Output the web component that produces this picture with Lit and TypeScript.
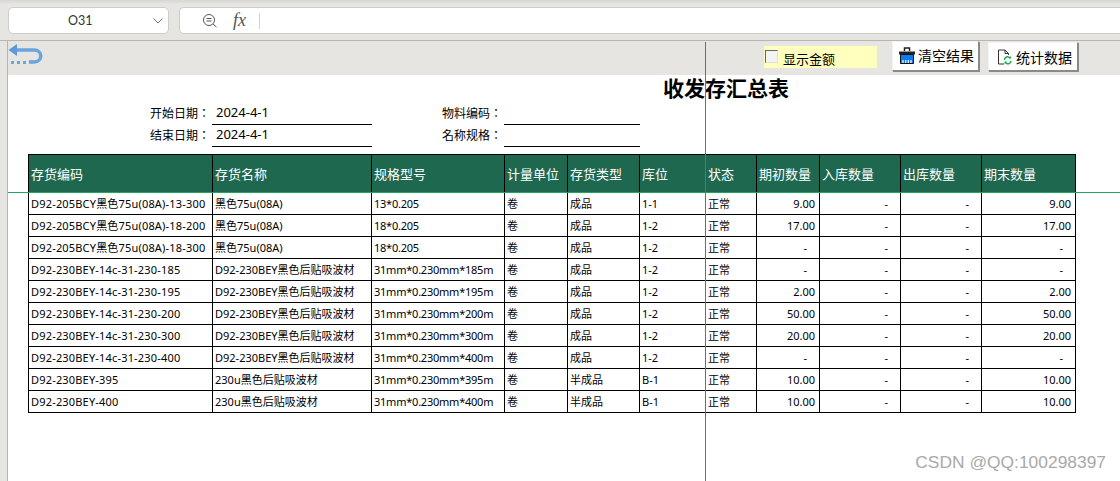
import { LitElement, html, css, svg } from "lit";
import { customElement } from "lit/decorators.js";

type Row = string[];
const ROWS: Row[] = [
  ["D92-205BCY黑色75u(08A)-13-300", "黑色75u(08A)", "13*0.205", "卷", "成品", "1-1", "正常", "9.00", "-", "-", "9.00"],
  ["D92-205BCY黑色75u(08A)-18-200", "黑色75u(08A)", "18*0.205", "卷", "成品", "1-2", "正常", "17.00", "-", "-", "17.00"],
  ["D92-205BCY黑色75u(08A)-18-300", "黑色75u(08A)", "18*0.205", "卷", "成品", "1-2", "正常", "-", "-", "-", "-"],
  ["D92-230BEY-14c-31-230-185", "D92-230BEY黑色后贴吸波材", "31mm*0.230mm*185m", "卷", "成品", "1-2", "正常", "-", "-", "-", "-"],
  ["D92-230BEY-14c-31-230-195", "D92-230BEY黑色后贴吸波材", "31mm*0.230mm*195m", "卷", "成品", "1-2", "正常", "2.00", "-", "-", "2.00"],
  ["D92-230BEY-14c-31-230-200", "D92-230BEY黑色后贴吸波材", "31mm*0.230mm*200m", "卷", "成品", "1-2", "正常", "50.00", "-", "-", "50.00"],
  ["D92-230BEY-14c-31-230-300", "D92-230BEY黑色后贴吸波材", "31mm*0.230mm*300m", "卷", "成品", "1-2", "正常", "20.00", "-", "-", "20.00"],
  ["D92-230BEY-14c-31-230-400", "D92-230BEY黑色后贴吸波材", "31mm*0.230mm*400m", "卷", "成品", "1-2", "正常", "-", "-", "-", "-"],
  ["D92-230BEY-395", "230u黑色后贴吸波材", "31mm*0.230mm*395m", "卷", "半成品", "B-1", "正常", "10.00", "-", "-", "10.00"],
  ["D92-230BEY-400", "230u黑色后贴吸波材", "31mm*0.230mm*400m", "卷", "半成品", "B-1", "正常", "10.00", "-", "-", "10.00"],
];
const HEAD = ["存货编码", "存货名称", "规格型号", "计量单位", "存货类型", "库位", "状态", "期初数量", "入库数量", "出库数量", "期末数量"];
const WIDTHS = [184, 159, 133, 63, 72, 66, 51, 63, 81, 81, 94];

@customElement("app-root")
export class AppRoot extends LitElement {
  static styles = css`
    :host {
      display: block;
      position: relative;
      width: 1120px;
      height: 481px;
      overflow: hidden;
      background: #e6e5e1;
      font-family: "Noto Sans", "Noto Sans CJK SC", sans-serif;
      color: #000;
    }
    .top {
      display: flex;
      gap: 10px;
      height: 41px;
      box-sizing: border-box;
      padding: 7px 0 8px 8px;
      border-bottom: 1px solid #b8b6b1;
      background: linear-gradient(#d6d5d1 0, #e6e5e1 4px);
    }
    .namebox, .fx {
      background: #fff;
      border: 1px solid #cfcdc8;
      border-radius: 5px;
      display: flex;
      align-items: center;
      box-sizing: border-box;
      height: 27px;
    }
    .namebox { width: 161px; flex: none; justify-content: space-between; padding: 0 4px 0 59px; font-family: "Lato", sans-serif; font-size: 12.5px; color: #333; }
    .fx { flex: 1; border-right: none; border-radius: 5px 0 0 5px; padding-left: 22px; gap: 15px; }
    .fxsep { width: 1px; height: 16px; background: #d5d3ce; margin-left: -2px; }
    .fxt { font-family: "Liberation Serif", serif; font-style: italic; font-size: 18px; color: #555; }
    .sheet { margin-left: 7px; border-left: 1px solid #b8b6b1; height: 440px; background: #fff; }
    .bar {
      height: 34px;
      background: #e6e5e1;
      display: flex;
      align-items: flex-start;
    }
    .back { margin: 1px 0 0 0; flex: none; line-height: 0; }
    .amount {
      margin: 5px 0 0 720px;
      width: 113px;
      height: 22px;
      background: #ffffbe;
      display: flex;
      align-items: center;
      box-sizing: border-box;
      padding: 0 0 0 1px;
      gap: 5px;
      font-size: 13px;
    }
    .box {
      width: 11px; height: 11px;
      flex: none;
      background: #f4f4f4;
      border: 1px solid;
      border-color: #666 #ddd #ddd #666;
      margin-top: -2px;
    }
    .amount span { line-height: 18px; padding-top: 3px; }
    .btn {
      box-sizing: border-box;
      height: 30px;
      background: #fff;
      border: 1px solid;
      border-color: #f4f4f4 #8a8a86 #8a8a86 #f4f4f4;
      box-shadow: 1px 1px 0 #8a8a86;
      display: flex;
      align-items: center;
      font-size: 14px;
      white-space: nowrap;
    }
    .b1 { width: 87px; margin-left: 15px; padding-left: 5px; gap: 2px; }
    .b1 span { margin-top: -2px; }
    .b2 { width: 90px; margin-left: 9px; padding-left: 8px; gap: 4px; margin-top: 1px; height: 29px; }
    .report { padding: 0 0 0 20px; }
    .title {
      margin: 0;
      padding-left: 635px;
      font-size: 21px;
      font-weight: 700;
      line-height: 27px;
      white-space: nowrap;
    }
    .meta {
      display: grid;
      grid-template-columns: 184px 160px 132px 136px;
      grid-template-rows: 23px 22px;
      font-size: 12px;
    }
    .meta .l {
      font-family: "Noto Sans CJK TC", "Noto Sans CJK SC", sans-serif;
      text-align: right;
      line-height: 20px;
      padding: 0 2px 2px 0;
      align-self: end;
    }
    .meta .v {
      border-bottom: 1px solid #000;
      line-height: 20px;
      height: 23px;
      padding: 0 0 2px 4px;
      box-sizing: border-box;
      font-size: 13px;
      align-self: end;
    }
    table {
      border-collapse: collapse;
      table-layout: fixed;
      width: 1047px;
      margin-top: 7px;
      font-size: 11px;
    }
    th, td {
      border: 1px solid #000;
      padding: 0 0 0 2px;
      overflow: hidden;
      white-space: nowrap;
      text-align: left;
      font-weight: 400;
    }
    th {
      height: 38px;
      background: #1f6850;
      color: #fff;
      font-size: 13px;
      box-sizing: border-box;
    }
    td { height: 22px; box-sizing: border-box; line-height: 20px; }
    td.code { letter-spacing: 0.18px; }
    td.spec { letter-spacing: -0.23px; }
    td.n { text-align: right; padding: 0 4px 0 0; }
    td.d { padding-right: 12px; }
    .hline { position: absolute; left: 8px; right: 0; top: 192px; height: 1px; background: #1fa660; }
    .vline { position: absolute; left: 705px; top: 42px; bottom: 0; width: 1px; background: #1f9a5c; }
    .wm {
      position: absolute;
      right: 14px;
      top: 452px;
      font-family: "Liberation Sans", sans-serif;
      font-size: 17.4px;
      line-height: 20px;
      color: #a9a9a9;
      white-space: nowrap;
    }
  `;

  private chevron() {
    return svg`<svg width="12" height="8" viewBox="0 0 12 8"><path d="M1.5 1.5 6 6l4.5-4.5" fill="none" stroke="#777" stroke-width="1"/></svg>`;
  }
  private zoomIcon() {
    return svg`<svg width="16" height="16" viewBox="0 0 16 16" fill="none" stroke="#555" stroke-width="1"><circle cx="7" cy="7" r="5.5"/><path d="M4.5 5.500h5M4.500 8h5M11 11l3.500 3"/></svg>`;
  }
  private backIcon() {
    return svg`<svg width="36" height="24" viewBox="0 0 36 24">
      <path d="M7 8H26C35 8 35 20 26 20H21" fill="none" stroke="#6aa5de" stroke-width="3.5"/>
      <path d="M0.500 8 9 2V14Z" fill="#5b9ad8"/>
      <path d="M3 19h3v3H3zM9 19h3v3H9zM15 19h3v3h-3z" fill="#6aa5de"/>
    </svg>`;
  }
  private brushIcon() {
    return svg`<svg width="18" height="18" viewBox="0 0 18 18">
      <path d="M6.500 4V1H11.500V4" fill="none" stroke="#222" stroke-width="1.500"/>
      <path d="M1 4.500H17V7.500H1Z" fill="#222"/>
      <path d="M2.500 7.500H15.500V16.500H2.500Z" fill="#0a7cf0" stroke="#111" stroke-width="1"/>
      <path d="M5 13v3M7.700 13v3M10.300 13v3M13 13v3" stroke="#fff" stroke-width="1.200"/>
    </svg>`;
  }
  private docIcon() {
    return svg`<svg width="15" height="16" viewBox="0 0 15 16">
      <path d="M7 15H1.500V1H8L11.500 4.500V6M8 1V4.500H11.500" fill="none" stroke="#333" stroke-width="1"/>
      <path d="M7.500 11A3 3 0 0 1 13 9.200M14 12A3 3 0 0 1 8.500 13.500" fill="none" stroke="#18a84f" stroke-width="1.400"/>
      <path d="M11.500 9.500H14V7ZM10 12.500H7.500V15Z" fill="#18a84f"/>
    </svg>`;
  }

  private cellClass(c: string, i: number) {
    if (i === 0) return "code";
    if (i === 2) return "spec";
    if (i >= 7) return c === "-" ? "n d" : "n";
    return "";
  }

  render() {
    return html`
      <div class="top">
        <div class="namebox"><span>O31</span>${this.chevron()}</div>
        <div class="fx">${this.zoomIcon()}<span class="fxt">fx</span><i class="fxsep"></i></div>
      </div>
      <div class="sheet">
        <div class="bar">
          <div class="back">${this.backIcon()}</div>
          <div class="amount"><i class="box"></i><span>显示金额</span></div>
          <div class="btn b1">${this.brushIcon()}<span>清空结果</span></div>
          <div class="btn b2">${this.docIcon()}<span>统计数据</span></div>
        </div>
        <div class="report">
          <h1 class="title">收发存汇总表</h1>
          <div class="meta">
            <div class="l">开始日期：</div><div class="v">2024-4-1</div>
            <div class="l">物料编码：</div><div class="v"></div>
            <div class="l">结束日期：</div><div class="v">2024-4-1</div>
            <div class="l">名称规格：</div><div class="v"></div>
          </div>
          <table>
            <colgroup>${WIDTHS.map((w) => html`<col style="width:${w}px" />`)}</colgroup>
            <thead><tr>${HEAD.map((h) => html`<th>${h}</th>`)}</tr></thead>
            <tbody>
              ${ROWS.map((r) => html`<tr>${r.map((c, i) => html`<td class=${this.cellClass(c, i)}>${c}</td>`)}</tr>`)}
            </tbody>
          </table>
        </div>
      </div>
      <i class="hline"></i>
      <i class="vline"></i>
      <div class="wm">CSDN @QQ:100298397</div>
    `;
  }
}
